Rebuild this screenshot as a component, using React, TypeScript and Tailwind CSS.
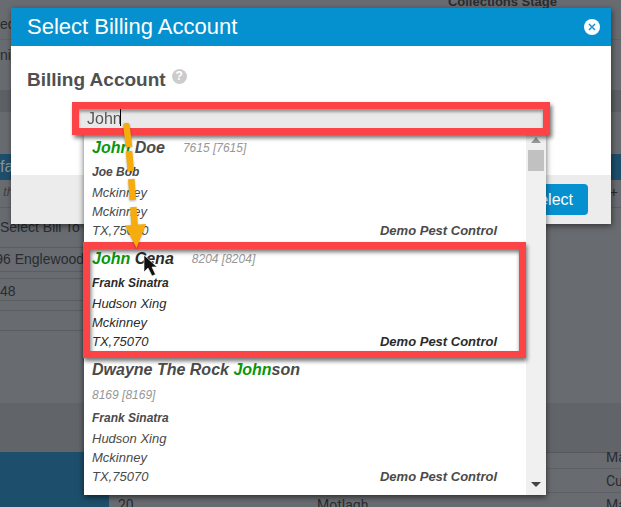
import { Fragment } from "react";

type Account = {
  id: string;
  name: string;
  contact: string;
  address: string[];
  office: string;
  active?: boolean;
};

const query = "John";

const accounts: Account[] = [
  {
    id: "7615",
    name: "John Doe",
    contact: "Joe Bob",
    address: ["Mckinney", "Mckinney", "TX,75070"],
    office: "Demo Pest Control",
  },
  {
    id: "8204",
    name: "John Cena",
    contact: "Frank Sinatra",
    address: ["Hudson Xing", "Mckinney", "TX,75070"],
    office: "Demo Pest Control",
    active: true,
  },
  {
    id: "8169",
    name: "Dwayne The Rock Johnson",
    contact: "Frank Sinatra",
    address: ["Hudson Xing", "Mckinney", "TX,75070"],
    office: "Demo Pest Control",
  },
];

function Highlight({ text }: { text: string }) {
  const parts = text.split(query);
  return (
    <>
      {parts.map((part, index) => (
        <Fragment key={index}>
          {index > 0 && <span className="text-[#0a960a]">{query}</span>}
          {part}
        </Fragment>
      ))}
    </>
  );
}

function AccountOption({ account }: { account: Account }) {
  return (
    <li
      role="option"
      aria-selected={Boolean(account.active)}
      className={`relative pb-[5px] pl-2 pr-[29px] italic ${account.active ? "text-[#2b2b2b]" : "text-[#4a4a4a]"}`}
    >
      <div className="flex max-w-72 flex-wrap items-center gap-x-[18px]">
        <span className="text-[16px] font-bold leading-[27px]">
          <Highlight text={account.name} />
        </span>
        <span className="text-[12px] leading-6 text-[#979797]">
          {account.id} [{account.id}]
        </span>
      </div>
      <div className="text-[12px] font-bold leading-[22px]">{account.contact}</div>
      <div className="flex items-end justify-between text-[13px] leading-[19px]">
        <address>
          {account.address.map((line, index) => (
            <div key={index}>{line}</div>
          ))}
        </address>
        <span className="font-bold">{account.office}</span>
      </div>
      {account.active && (
        <div className="pointer-events-none absolute -left-px -top-[3px] bottom-[-2px] right-0 border-[7px] border-[#fc4345] drop-shadow-[1px_3px_2px_rgba(0,0,0,0.55)]" />
      )}
    </li>
  );
}

function Backdrop() {
  return (
    <div
      aria-hidden
      className="absolute inset-0 flex flex-col overflow-hidden whitespace-nowrap bg-[#686b6f] text-[14px] text-[#292c30]"
    >
      <div className="flex h-2 items-end justify-end pr-[64px]">
        <span className="text-[13px] font-bold leading-[12px]">Collections Stage</span>
      </div>
      <div className="h-8 border-b border-[#5f6266] leading-8">ed</div>
      <div className="h-[50px] leading-[30px]">nie</div>
      <div className="h-[22px] bg-[#5d6064]" />
      <div className="h-[42px]" />
      <div className="h-[26px] bg-[#1d4e6b] text-[16px] leading-[26px] text-[#8c9296]">fa</div>
      <div className="flex h-7 justify-between border-b border-[#5c5f63] pr-[3px] leading-6">
        <span className="text-[12px] italic text-[#3b3e42]">&nbsp;th</span>
        <span>+</span>
      </div>
      <div className="h-[39px] leading-[38px]">Select Bill To</div>
      <div className="w-[84px]">
        <div className="flex h-[25px] justify-end border-y border-[#5a5d61] leading-[22px]">96 Englewood</div>
        <div className="h-[6px]" />
        <div className="h-[23px] border-y border-[#5a5d61] leading-[24px]">48</div>
        <div className="h-[9px]" />
        <div className="h-[21px] border-y border-[#5a5d61]" />
      </div>
      <div className="h-[72px]" />
      <div className="h-[49px] bg-[#616469]" />
      <div className="flex flex-1 overflow-hidden font-[Roboto,sans-serif]">
        <div className="w-[109px] bg-[#1d4e6b]" />
        <div className="flex-1 border-t border-[#55585c]">
          <div className="flex h-4 justify-end border-b border-[#5c5f63] leading-[8px]">
            <span className="w-[15px]">Ma</span>
          </div>
          <div className="flex h-6 justify-end border-b border-[#5c5f63] leading-6">
            <span className="w-[15px]">Cu</span>
          </div>
          <div className="flex leading-6">
            <span className="w-[208px] pl-[9px]">20</span>
            <span className="flex-1">Motlagh</span>
            <span className="w-[15px]">Ma</span>
          </div>
        </div>
      </div>
    </div>
  );
}

function Scrollbar() {
  return (
    <div className="flex w-5 shrink-0 flex-col items-center justify-between bg-[#f0f0f0] pb-2 pt-1">
      <div>
        <svg width="10" height="6" viewBox="0 0 10 6" className="mx-auto">
          <path d="M0 6 5 0l5 6z" fill="#999" />
        </svg>
        <div className="mt-[7px] h-[21px] w-4 bg-[#c1c1c1]" />
      </div>
      <svg width="10" height="5" viewBox="0 0 10 5">
        <path d="M0 0h10L5 5z" fill="#444" />
      </svg>
    </div>
  );
}

function Pointer() {
  return (
    <svg
      width="50"
      height="165"
      viewBox="0 0 50 165"
      className="pointer-events-none absolute left-[38px] top-[15px] z-20"
    >
      <g className="drop-shadow-[0_1px_1px_rgba(0,0,0,0.3)]">
        <g stroke="#f5ac0c" strokeWidth="6.5">
          <path d="M16.5 9 19 30" />
          <path d="m19 34 1.8 20" />
          <path d="m21.3 62 1.5 21" />
          <path d="m23.4 90 1.2 20" />
        </g>
        <circle cx="16.5" cy="9" r="3.25" fill="#f5ac0c" />
        <path d="m15 108.500 21-1.500-9.500 24z" fill="#f5ac0c" />
      </g>
      <path
        d="M34 138v17l4-4 4 8 3.500-1.500-3.500-7.500h5z"
        fill="#111"
        stroke="#fff"
        strokeWidth="0.6"
      />
    </svg>
  );
}

export default function App() {
  return (
    <div className="relative min-h-screen overflow-hidden px-[10px] pt-2 font-['Liberation_Sans',Arial,sans-serif]">
      <Backdrop />

      <div
        role="dialog"
        aria-labelledby="dialog-title"
        className="relative ml-px bg-white shadow-[1px_2px_6px_rgba(0,0,0,0.5)]"
      >
        <header className="flex h-[38px] items-center justify-between bg-[#0591cf] pl-4 pr-[11px] text-white">
          <h1 id="dialog-title" className="text-[22px] leading-7">
            Select Billing Account
          </h1>
          <button
            type="button"
            aria-label="Close"
            className="flex size-4 items-center justify-center rounded-full bg-white text-[#2196d3]"
          >
            <svg width="8" height="8" viewBox="0 0 8 8">
              <path d="m1 1 6 6M7 1 1 7" stroke="currentColor" strokeWidth="1.6" />
            </svg>
          </button>
        </header>

        <div className="h-[129px] pl-4 pr-[61px] pt-5">
          <div className="flex h-9 gap-[6px]">
            <label htmlFor="account" className="text-[19px] font-bold leading-7 text-[#505050]">
              Billing Account
            </label>
            <button
              type="button"
              aria-label="Help"
              className="mt-[3px] size-[15px] rounded-full bg-[#ccc] text-[12px] font-bold leading-[15px] text-white"
            >
              ?
            </button>
          </div>

          <div className="relative ml-[45px]">
            <div className="relative z-10 border-[7px] border-[#fc4345] drop-shadow-[2px_3px_2px_rgba(0,0,0,0.55)]">
              <input
                id="account"
                type="text"
                defaultValue={query}
                autoComplete="off"
                className="block h-[19px] w-full bg-[#e9e9e9] px-2 text-[16px] leading-[19px] text-[#555] shadow-[inset_0_3px_3px_rgba(0,0,0,0.35)] outline-none"
              />
              <span className="absolute left-[41px] top-0 h-[17px] w-px bg-black" />
            </div>

            <div className="absolute left-3 right-1 top-[31px] flex bg-white shadow-[0_2px_6px_rgba(0,0,0,0.6)]">
              <ul role="listbox" aria-label="Billing accounts" className="min-w-0 flex-1 pb-1 pt-px">
                {accounts.map((account) => (
                  <AccountOption key={account.id} account={account} />
                ))}
              </ul>
              <Scrollbar />
            </div>

            <Pointer />
          </div>
        </div>

        <footer className="flex h-[49px] items-center justify-end bg-[#ececec] pr-[23px]">
          <button type="button" className="h-[31px] rounded bg-[#0591cf] px-[15px] text-[16px] text-white">
            Select
          </button>
        </footer>
      </div>
    </div>
  );
}
